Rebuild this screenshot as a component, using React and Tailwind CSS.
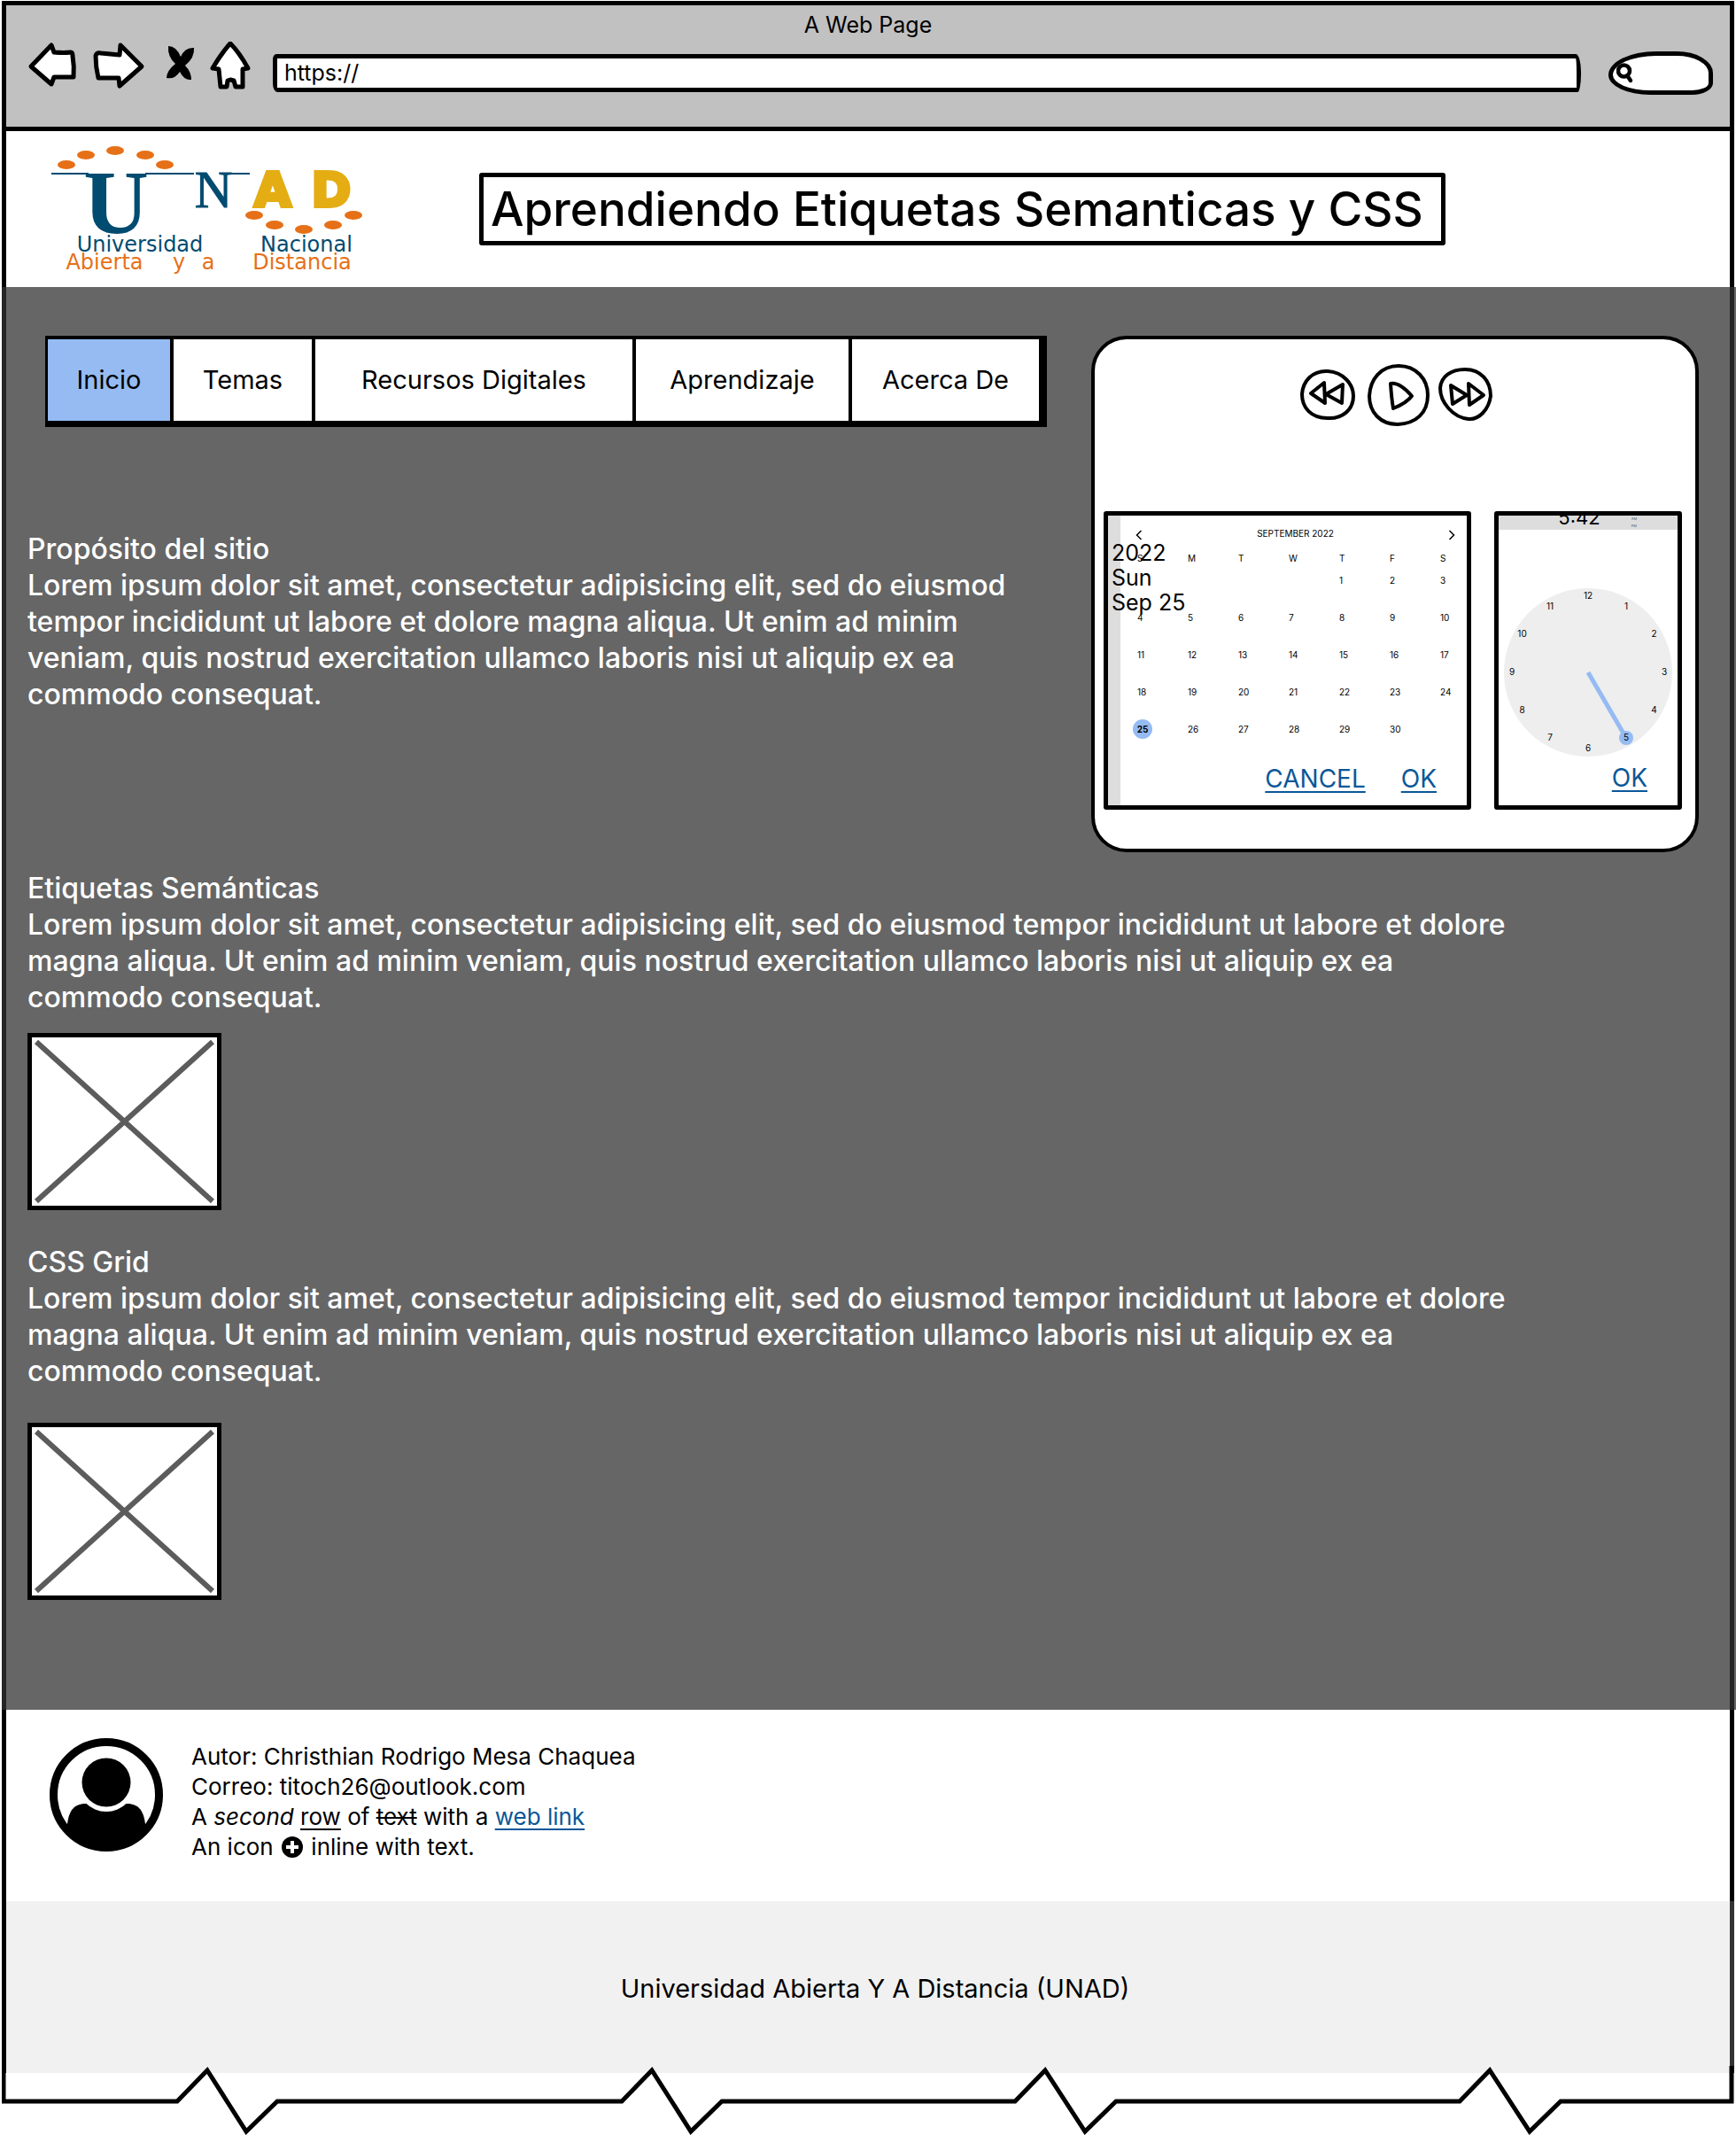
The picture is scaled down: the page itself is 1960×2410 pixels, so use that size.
import React from "react";

const NAV = ["Inicio", "Temas", "Recursos Digitales", "Aprendizaje", "Acerca De"];
const WEEKDAYS = ["S", "M", "T", "W", "T", "F", "S"];
const WEEKS = [
  ["", "", "", "", 1, 2, 3],
  [4, 5, 6, 7, 8, 9, 10],
  [11, 12, 13, 14, 15, 16, 17],
  [18, 19, 20, 21, 22, 23, 24],
  [25, 26, 27, 28, 29, 30, ""],
];
const HOURS = [12, 1, 2, 3, 4, 5, 6, 7, 8, 9, 10, 11];
const LOREM =
  "Lorem ipsum dolor sit amet, consectetur adipisicing elit, sed do eiusmod tempor incididunt ut labore et dolore magna aliqua. Ut enim ad minim veniam, quis nostrud exercitation ullamco laboris nisi ut aliquip ex ea commodo consequat.";

function ToolbarIcon({ label, box, className, children }) {
  return (
    <button type="button" aria-label={label} className={className}>
      <svg viewBox={box} className="block h-[70px] w-full" fill="#fff" stroke="#000" strokeWidth="5" strokeLinejoin="round" strokeLinecap="round">
        {children}
      </svg>
    </button>
  );
}

function BrowserBar() {
  return (
    <header className="mr-[2px] border-[5px] border-black bg-[#c1c1c1] pb-[26px] pt-1">
      <p className="text-center text-[25px] leading-[37px]">A Web Page</p>
      <div className="flex items-center pl-[23px] pr-[19px]">
        <ToolbarIcon label="Atrás" box="30 47 60 70" className="w-[60px] shrink-0">
          <path d="M35 75 L58 51 L61 59 Q72 60 80 59 Q82 59 82 63 Q84 75 83 87 L61 87 L58 95 Z" />
        </ToolbarIcon>
        <ToolbarIcon label="Adelante" box="104 47 60 70" className="ml-3.5 w-[60px] shrink-0">
          <path d="M108 63 Q109 59 114 60 L135 62 L136 51 L160 75 L135 97 L134 88 L111 88 Q108 76 108 63 Z" />
        </ToolbarIcon>
        <ToolbarIcon label="Detener" box="184 47 40 70" className="ml-5 w-10 shrink-0">
          <path
            fill="#000"
            stroke="none"
            d="M190 52 Q199 52 204 64 Q209 53 219 54 Q220 65 209 74 Q216 81 216 90 Q208 91 203 81 Q197 90 188 88 Q188 80 198 72 Q189 64 190 52 Z"
          />
        </ToolbarIcon>
        <ToolbarIcon label="Inicio" box="234 47 52 70" className="ml-2.5 w-[52px] shrink-0">
          <path d="M260 49 Q250 60 240 77 L247 78 L249 98 L256 98 L257 91 L260 90 L264 91 L266 98 L274 98 L274 78 L280 77 Q270 59 260 49 Z" />
        </ToolbarIcon>
        <input
          type="text"
          aria-label="Dirección"
          defaultValue="https://"
          className="ml-[22px] h-[43px] min-w-0 flex-1 rounded-[4px_6px_4px_5px/6px_20px_20px_10px] border-[5px] border-black bg-white px-2 text-[25px] leading-8 outline-none"
        />
        <label className="ml-[31px] flex h-[49px] w-[118px] shrink-0 items-center rounded-[50%_38%_22%_44%/60%_55%_30%_50%] border-[5px] border-black bg-white pl-1">
          <svg viewBox="0 0 20 28" className="h-7 w-5 shrink-0" fill="none" stroke="#000" strokeWidth="4.5" strokeLinecap="round">
            <circle cx="8.500" cy="12" r="6.500" />
            <path d="M12 17 L16 23" />
          </svg>
          <input type="search" aria-label="Buscar" className="w-full min-w-0 bg-transparent outline-none" />
        </label>
      </div>
    </header>
  );
}

function Logo() {
  return (
    <svg viewBox="58 163 362 148" className="h-[148px] w-[362px] shrink-0" role="img" aria-label="UNAD">
      <g fill="#e67017">
        {[[75, 187], [97, 176], [130, 171], [164, 176], [186, 187], [287, 244], [310, 255], [343, 260], [376, 255], [399, 244]].map(([x, y]) => (
          <ellipse key={x} cx={x} cy={y} rx="10" ry="5" />
        ))}
      </g>
      <g fill="#004b70" fontFamily="Liberation Serif, serif">
        <path d="M58 196 H100 V198 H58 Z M164 196 H219 V198 H164 Z M255 196 H282 V198 H255 Z" />
        <text x="131" y="264" textAnchor="middle" fontWeight="700" fontSize="102">U</text>
        <text x="241" y="235" textAnchor="middle" fontSize="59" stroke="#004b70">N</text>
      </g>
      <g fill="#e4ad13" stroke="#e4ad13" strokeWidth="4" fontFamily="DejaVu Sans, sans-serif" fontWeight="700" fontSize="54">
        <text x="308" y="234" textAnchor="middle">A</text>
        <text x="374" y="234" textAnchor="middle">D</text>
      </g>
      <g fontFamily="DejaVu Sans, sans-serif" fontSize="24">
        <g fill="#004b70" textAnchor="middle">
          <text x="158" y="285">Universidad</text>
          <text x="346" y="285">Nacional</text>
        </g>
        <g fill="#e67017" textAnchor="middle">
          <text x="118" y="305">Abierta</text>
          <text x="202" y="305">y</text>
          <text x="235" y="305">a</text>
          <text x="341" y="305">Distancia</text>
        </g>
      </g>
    </svg>
  );
}

function MediaControls() {
  return (
    <div className="flex items-center justify-center pl-2" role="group" aria-label="Reproductor">
      <button type="button" aria-label="Retroceder" className="w-[62px]">
        <svg viewBox="1468 411 62 70" className="block w-full" fill="none" stroke="#000" strokeWidth="4" strokeLinejoin="round">
          <path d="M1499 419 C1517 420 1528 434 1528 447 C1528 463 1515 473 1499 472 C1480 472 1470 460 1470 445 C1471 430 1482 418 1499 419 Z" />
          <path d="M1480 444 L1495 432 L1496 455 Z M1497 445 L1516 434 L1515 455 Z" />
        </svg>
      </button>
      <button type="button" aria-label="Reproducir" className="ml-3.5 w-[70px]">
        <svg viewBox="1544 410 70 70" className="block w-full" fill="none" stroke="#000" strokeWidth="4" strokeLinejoin="round">
          <path d="M1579 412 C1599 412 1612 427 1612 445 C1612 465 1599 477 1578 478 C1558 478 1546 464 1546 446 C1547 427 1559 412 1579 412 Z" />
          <path d="M1570 432 Q1580 430 1594 446 Q1588 454 1573 460 Q1571 448 1570 432 Z" />
        </svg>
      </button>
      <button type="button" aria-label="Avanzar" className="ml-2.5 w-[62px]">
        <svg viewBox="1624 410 62 70" className="block w-full" fill="none" stroke="#000" strokeWidth="4" strokeLinejoin="round">
          <path d="M1654 416 C1672 416 1683 429 1683 446 C1681 461 1670 473 1658 472 C1640 470 1626 453 1626 437 C1627 424 1638 416 1654 416 Z" />
          <path d="M1638 434 L1656 445 L1640 455 Z M1658 432 L1675 445 L1659 456 Z" />
        </svg>
      </button>
    </div>
  );
}

function Chevron({ d }) {
  return (
    <svg viewBox="0 0 8 12" className="h-3 w-2" fill="none" stroke="#000" strokeWidth="1.5">
      <path d={d} />
    </svg>
  );
}

function Calendar() {
  return (
    <div className="relative flex min-w-0 flex-1 overflow-hidden rounded-[3px] border-[5px] border-black bg-white">
      <div className="w-3.5 shrink-0 bg-[#dddddd]" />
      <div className="min-w-0 flex-1 pt-3">
        <div className="flex items-center justify-between pl-[17px] pr-[13px] text-[10px] leading-4">
          <button type="button" aria-label="Mes anterior" className="pt-1"><Chevron d="M6.500 1 L1.500 6 L6.500 11" /></button>
          <span>SEPTEMBER 2022</span>
          <button type="button" aria-label="Mes siguiente" className="pt-1"><Chevron d="M1.500 1 L6.500 6 L1.500 11" /></button>
        </div>
        <div className="mt-3 pl-[19px]">
          <table className="w-full table-fixed text-left text-[10px] leading-4" aria-label="September 2022">
            <thead>
              <tr className="h-[25px] align-top">
                {WEEKDAYS.map((d, i) => (
                  <th key={i} scope="col" className={i < 6 ? "w-[57px] font-normal" : "font-normal"}>{d}</th>
                ))}
              </tr>
            </thead>
            <tbody>
              {WEEKS.map((week, r) => (
                <tr key={r} className="h-[42px] align-top">
                  {week.map((d, i) => (
                    <td key={i}>
                      {d === 25 ? (
                        <span className="-ml-[5px] -mt-[3px] flex size-[22px] items-center justify-center rounded-full bg-[#95bbf2] font-bold">25</span>
                      ) : d}
                    </td>
                  ))}
                </tr>
              ))}
            </tbody>
          </table>
        </div>
        <div className="mt-1.5 flex justify-end gap-10 pb-3.5 pr-[34px] text-[28px] leading-8 text-[#0b5798]">
          <a href="#cancel" className="underline decoration-2 underline-offset-4">CANCEL</a>
          <a href="#ok" className="underline decoration-2 underline-offset-4">OK</a>
        </div>
      </div>
      <p className="absolute left-1 top-7 text-[25px] leading-[28px]">
        2022<br />Sun<br />Sep 25
      </p>
    </div>
  );
}

function Clock() {
  return (
    <div className="relative flex w-[212px] shrink-0 flex-col overflow-hidden rounded-[3px] border-[5px] border-black bg-white">
      <div className="flex h-4 items-end justify-center bg-[#dddddd] pr-5">
        <span className="text-[22px] leading-7">5:42</span>
      </div>
      <span className="absolute right-[46px] top-0 text-[4px] leading-[8px] text-gray-600">AM<br />PM</span>
      <svg viewBox="0 0 190 190" className="mx-auto mt-[66px] block size-[190px]" role="img" aria-label="5:42">
        <circle cx="95" cy="95" r="95" fill="#eeeeee" />
        <path d="M95 95 L138 169" stroke="#95bbf2" strokeWidth="5" />
        <circle cx="138" cy="169" r="8" fill="#95bbf2" />
        <g fontSize="10" textAnchor="middle">
          {HOURS.map((h, i) => {
            const a = (i * Math.PI) / 6;
            return (
              <text key={h} x={95 + 86 * Math.sin(a)} y={98 - 86 * Math.cos(a)}>{h}</text>
            );
          })}
        </g>
      </svg>
      <a href="#ok-time" className="ml-auto mr-[34px] mt-2 text-[28px] leading-8 text-[#0b5798] underline decoration-2 underline-offset-4">OK</a>
    </div>
  );
}

function Placeholder() {
  return (
    <div className="h-[200px] w-[219px] border-[5px] border-black bg-white">
      <svg viewBox="0 0 209 190" className="block size-full" role="img" aria-label="Imagen" stroke="#5c5c5c" strokeWidth="6">
        <path d="M5 5 L204 185 M204 5 L5 185" />
      </svg>
    </div>
  );
}

function Article({ title, className }) {
  return (
    <section className={className}>
      <h2>{title}</h2>
      <p>{LOREM}</p>
    </section>
  );
}

function Footer() {
  return (
    <div className="mr-[2px] flex border-x-[5px] border-black bg-white pb-11 pl-[49px] pt-8">
      <svg viewBox="0 0 128 128" className="size-32 shrink-0" role="img" aria-label="Autor">
        <clipPath id="avatar"><circle cx="64" cy="64" r="62" /></clipPath>
        <circle cx="64" cy="64" r="59.500" fill="#fff" stroke="#000" strokeWidth="9" />
        <path clipPath="url(#avatar)" d="M20 97 C22 80 29 74 41 74 H87 C99 74 106 80 108 97 V128 H20 Z" />
        <circle cx="64" cy="50" r="33" fill="#fff" />
        <circle cx="64" cy="50" r="27.500" />
      </svg>
      <div className="ml-8 pt-1 text-[26px] leading-[34px]">
        <p>Autor: Christhian Rodrigo Mesa Chaquea</p>
        <p>Correo: titoch26@outlook.com</p>
        <p>
          A <em>second</em> <u className="decoration-2 underline-offset-4">row</u> of <s className="decoration-2">text</s> with a{" "}
          <a href="#link" className="text-[#0b5798] underline decoration-2 underline-offset-4">web link</a>
        </p>
        <p>
          An icon{" "}
          <svg viewBox="0 0 24 24" className="mx-0.5 inline size-6 align-[-3px]" aria-hidden="true">
            <circle cx="12" cy="12" r="12" />
            <path d="M12 5 V19 M5 12 H19" stroke="#fff" strokeWidth="4" />
          </svg>{" "}
          inline with text.
        </p>
      </div>
    </div>
  );
}

export default function App() {
  return (
    <div className="bg-white pl-[2px] pt-px font-['Inter',sans-serif] text-black">
      <BrowserBar />
      <div className="mr-[2px] flex items-center border-x-[5px] border-black bg-white py-3.5 pl-[51px]">
        <Logo />
        <h1 className="ml-[121px] whitespace-nowrap rounded-[3px] border-[5px] border-black pl-2 pr-5 text-[53px] font-medium leading-[72px]">
          Aprendiendo Etiquetas Semanticas y CSS
        </h1>
      </div>

      <div className="bg-[#666666] pr-[2px]">
        <main className="border-x-[5px] border-[#252525] pb-[124px] pl-6 pt-[55px] text-[32px] font-medium leading-[41px] text-white">
          <div className="flex items-start pr-[35px]">
            <div className="min-w-0 flex-1">
              <nav className="ml-5 grid grid-cols-[138fr_160fr_362fr_244fr_215fr] border-b-[7px] border-l-[3px] border-r-[9px] border-t-4 border-black bg-white text-[29px] font-normal leading-[92px] text-black">
                {NAV.map((item, i) => (
                  <a
                    key={item}
                    href={"#" + i}
                    aria-current={i === 0 ? "page" : undefined}
                    className={i === 0 ? "whitespace-nowrap bg-[#95bbf2] text-center" : "whitespace-nowrap border-l-4 border-black text-center"}
                  >
                    {item}
                  </a>
                ))}
              </nav>
              <Article title="Propósito del sitio" className="mt-[117px] max-w-[1130px]" />
            </div>
            <aside className="ml-[50px] w-[686px] shrink-0 rounded-[40px] border-4 border-black bg-white pb-11 pl-2.5 pr-[15px] pt-7 font-normal text-black">
              <MediaControls />
              <div className="mt-24 flex items-stretch gap-[26px]">
                <Calendar />
                <Clock />
              </div>
            </aside>
          </div>
          <Article title="Etiquetas Semánticas" className="mb-5 mt-5 max-w-[1695px]" />
          <Placeholder />
          <Article title="CSS Grid" className="mb-[38px] mt-[38px] max-w-[1695px]" />
          <Placeholder />
        </main>
      </div>

      <Footer />
      <footer className="mr-[2px] border-l-[5px] border-r-[5px] border-l-black border-r-[#333333] bg-[#f1f1f1] pb-[74px] pl-4 pt-[78px] text-center text-[29px] leading-[42px]">
        Universidad Abierta Y A Distancia (UNAD)
      </footer>
      <svg viewBox="2 2332 1958 78" preserveAspectRatio="none" className="-mt-2 block h-[78px] w-full" fill="none" stroke="#000" strokeWidth="5" aria-hidden="true">
        <path d="M4 2332 V2372 H200 L234 2337 L278 2406 L313 2372 H702 L736 2337 L780 2406 L815 2372 H1146 L1180 2337 L1225 2406 L1260 2372 H1648 L1682 2337 L1727 2406 L1762 2372 H1955 V2332" />
      </svg>
    </div>
  );
}
